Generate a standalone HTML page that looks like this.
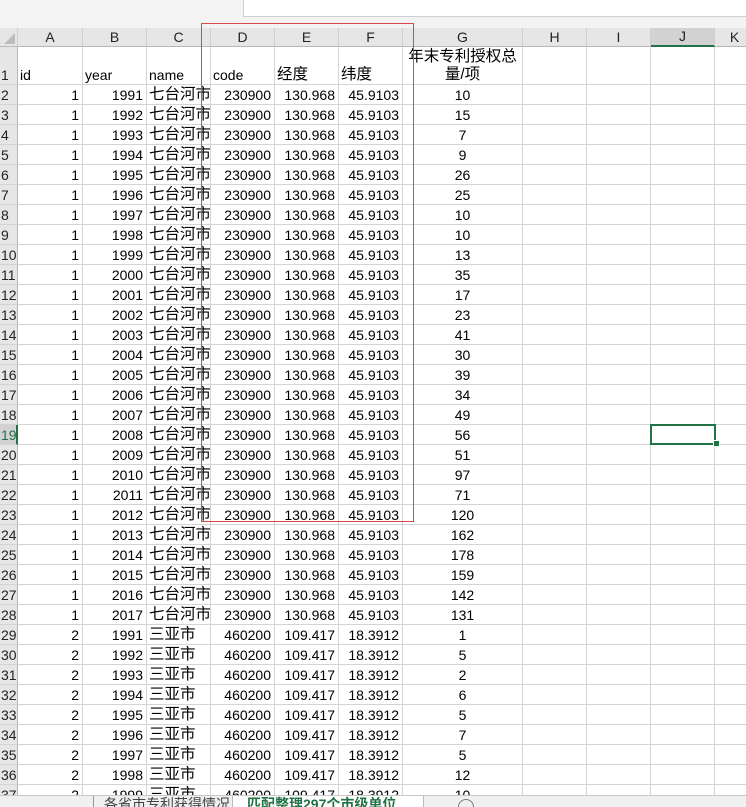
<!DOCTYPE html>
<html><head><meta charset="utf-8">
<style>
html,body{margin:0;padding:0;width:746px;height:807px;overflow:hidden;background:#fff;position:relative;font-family:"Liberation Sans","Noto Sans CJK SC",sans-serif;}
.top{position:absolute;left:0;top:0;width:746px;height:28px;background:#f3f3f3;}
.topbox{position:absolute;left:243px;top:0;width:503px;height:16px;background:#fff;border-left:1px solid #d0d0d0;border-bottom:1px solid #d0d0d0;}
table{position:absolute;left:0;top:28px;width:755px;border-collapse:separate;border-spacing:0;table-layout:fixed;font-size:14px;color:#000;}
td{box-sizing:border-box;padding:0 2px;border-right:1px solid #d4d4d4;border-bottom:1px solid #d4d4d4;height:20px;white-space:nowrap;overflow:hidden;vertical-align:bottom;line-height:18px;}
tr.h td{background:#e6e6e6;height:18px;text-align:center;border-right:1px solid #cfcfcf;border-bottom:1px solid #b8b8b8;color:#222;vertical-align:middle;line-height:17px;}
td.r{background:#e6e6e6;text-align:left;padding-left:1px;border-right:1px solid #b8b8b8;color:#222;font-size:14px;}
td.n{text-align:right;padding-right:3px;}
td.c{font-size:15.5px;}
td.g{text-align:center;}
tr.r1 td{height:38px;}
.sel{position:absolute;left:650px;top:424px;width:62px;height:17px;border:2px solid #217346;}
.selh{position:absolute;left:713px;top:440px;width:5px;height:5px;background:#217346;border:1px solid #fff;}
.red{position:absolute;left:201px;top:23px;width:211px;height:497px;border:1px solid #d84a4a;}
.tabs{position:absolute;left:0;top:795px;width:746px;height:12px;background:#f0f0f0;border-top:1px solid #c8c8c8;font-size:14px;overflow:hidden;}
.t1{position:absolute;left:93px;top:0;height:12px;border-left:1px solid #999;padding-left:10px;color:#444;line-height:16px;}
.t2{position:absolute;left:232px;top:-1px;width:192px;height:13px;background:#fff;color:#217346;font-weight:bold;line-height:18px;padding-left:14px;box-sizing:border-box;border-left:1px solid #bbb;border-right:1px solid #bbb;}
.plus{position:absolute;left:458px;top:3px;width:14px;height:14px;border:1px solid #777;border-radius:50%;}
</style></head><body>
<div class="top"><div class="topbox"></div></div>
<table>
<colgroup><col style="width:18px"><col style="width:65px"><col style="width:64px"><col style="width:64px"><col style="width:64px"><col style="width:64px"><col style="width:64px"><col style="width:120px"><col style="width:64px"><col style="width:64px"><col style="width:64px"><col style="width:40px"></colgroup>
<tr class="h"><td style="background:#e6e6e6;position:relative"><span style="position:absolute;right:2px;bottom:2px;width:0;height:0;border-left:11px solid transparent;border-bottom:11px solid #bdbdbd"></span></td><td>A</td><td>B</td><td>C</td><td>D</td><td>E</td><td>F</td><td>G</td><td>H</td><td>I</td><td style="background:#d2d2d2;border-bottom:2px solid #217346">J</td><td>K</td></tr>
<tr class="r1"><td class="r">1</td><td>id</td><td>year</td><td>name</td><td>code</td><td class="c">经度</td><td class="c">纬度</td><td class="g c" style="white-space:normal;line-height:18px">年末专利授权总量/项</td><td></td><td></td><td></td><td></td></tr>
<tr><td class="r">2</td><td class="n">1</td><td class="n">1991</td><td class="c">七台河市</td><td class="n">230900</td><td class="n">130.968</td><td class="n">45.9103</td><td class="g">10</td><td></td><td></td><td></td><td></td></tr>
<tr><td class="r">3</td><td class="n">1</td><td class="n">1992</td><td class="c">七台河市</td><td class="n">230900</td><td class="n">130.968</td><td class="n">45.9103</td><td class="g">15</td><td></td><td></td><td></td><td></td></tr>
<tr><td class="r">4</td><td class="n">1</td><td class="n">1993</td><td class="c">七台河市</td><td class="n">230900</td><td class="n">130.968</td><td class="n">45.9103</td><td class="g">7</td><td></td><td></td><td></td><td></td></tr>
<tr><td class="r">5</td><td class="n">1</td><td class="n">1994</td><td class="c">七台河市</td><td class="n">230900</td><td class="n">130.968</td><td class="n">45.9103</td><td class="g">9</td><td></td><td></td><td></td><td></td></tr>
<tr><td class="r">6</td><td class="n">1</td><td class="n">1995</td><td class="c">七台河市</td><td class="n">230900</td><td class="n">130.968</td><td class="n">45.9103</td><td class="g">26</td><td></td><td></td><td></td><td></td></tr>
<tr><td class="r">7</td><td class="n">1</td><td class="n">1996</td><td class="c">七台河市</td><td class="n">230900</td><td class="n">130.968</td><td class="n">45.9103</td><td class="g">25</td><td></td><td></td><td></td><td></td></tr>
<tr><td class="r">8</td><td class="n">1</td><td class="n">1997</td><td class="c">七台河市</td><td class="n">230900</td><td class="n">130.968</td><td class="n">45.9103</td><td class="g">10</td><td></td><td></td><td></td><td></td></tr>
<tr><td class="r">9</td><td class="n">1</td><td class="n">1998</td><td class="c">七台河市</td><td class="n">230900</td><td class="n">130.968</td><td class="n">45.9103</td><td class="g">10</td><td></td><td></td><td></td><td></td></tr>
<tr><td class="r">10</td><td class="n">1</td><td class="n">1999</td><td class="c">七台河市</td><td class="n">230900</td><td class="n">130.968</td><td class="n">45.9103</td><td class="g">13</td><td></td><td></td><td></td><td></td></tr>
<tr><td class="r">11</td><td class="n">1</td><td class="n">2000</td><td class="c">七台河市</td><td class="n">230900</td><td class="n">130.968</td><td class="n">45.9103</td><td class="g">35</td><td></td><td></td><td></td><td></td></tr>
<tr><td class="r">12</td><td class="n">1</td><td class="n">2001</td><td class="c">七台河市</td><td class="n">230900</td><td class="n">130.968</td><td class="n">45.9103</td><td class="g">17</td><td></td><td></td><td></td><td></td></tr>
<tr><td class="r">13</td><td class="n">1</td><td class="n">2002</td><td class="c">七台河市</td><td class="n">230900</td><td class="n">130.968</td><td class="n">45.9103</td><td class="g">23</td><td></td><td></td><td></td><td></td></tr>
<tr><td class="r">14</td><td class="n">1</td><td class="n">2003</td><td class="c">七台河市</td><td class="n">230900</td><td class="n">130.968</td><td class="n">45.9103</td><td class="g">41</td><td></td><td></td><td></td><td></td></tr>
<tr><td class="r">15</td><td class="n">1</td><td class="n">2004</td><td class="c">七台河市</td><td class="n">230900</td><td class="n">130.968</td><td class="n">45.9103</td><td class="g">30</td><td></td><td></td><td></td><td></td></tr>
<tr><td class="r">16</td><td class="n">1</td><td class="n">2005</td><td class="c">七台河市</td><td class="n">230900</td><td class="n">130.968</td><td class="n">45.9103</td><td class="g">39</td><td></td><td></td><td></td><td></td></tr>
<tr><td class="r">17</td><td class="n">1</td><td class="n">2006</td><td class="c">七台河市</td><td class="n">230900</td><td class="n">130.968</td><td class="n">45.9103</td><td class="g">34</td><td></td><td></td><td></td><td></td></tr>
<tr><td class="r">18</td><td class="n">1</td><td class="n">2007</td><td class="c">七台河市</td><td class="n">230900</td><td class="n">130.968</td><td class="n">45.9103</td><td class="g">49</td><td></td><td></td><td></td><td></td></tr>
<tr><td class="r" style="background:#d2d2d2;border-right:2px solid #217346;color:#217346">19</td><td class="n">1</td><td class="n">2008</td><td class="c">七台河市</td><td class="n">230900</td><td class="n">130.968</td><td class="n">45.9103</td><td class="g">56</td><td></td><td></td><td></td><td></td></tr>
<tr><td class="r">20</td><td class="n">1</td><td class="n">2009</td><td class="c">七台河市</td><td class="n">230900</td><td class="n">130.968</td><td class="n">45.9103</td><td class="g">51</td><td></td><td></td><td></td><td></td></tr>
<tr><td class="r">21</td><td class="n">1</td><td class="n">2010</td><td class="c">七台河市</td><td class="n">230900</td><td class="n">130.968</td><td class="n">45.9103</td><td class="g">97</td><td></td><td></td><td></td><td></td></tr>
<tr><td class="r">22</td><td class="n">1</td><td class="n">2011</td><td class="c">七台河市</td><td class="n">230900</td><td class="n">130.968</td><td class="n">45.9103</td><td class="g">71</td><td></td><td></td><td></td><td></td></tr>
<tr><td class="r">23</td><td class="n">1</td><td class="n">2012</td><td class="c">七台河市</td><td class="n">230900</td><td class="n">130.968</td><td class="n">45.9103</td><td class="g">120</td><td></td><td></td><td></td><td></td></tr>
<tr><td class="r">24</td><td class="n">1</td><td class="n">2013</td><td class="c">七台河市</td><td class="n">230900</td><td class="n">130.968</td><td class="n">45.9103</td><td class="g">162</td><td></td><td></td><td></td><td></td></tr>
<tr><td class="r">25</td><td class="n">1</td><td class="n">2014</td><td class="c">七台河市</td><td class="n">230900</td><td class="n">130.968</td><td class="n">45.9103</td><td class="g">178</td><td></td><td></td><td></td><td></td></tr>
<tr><td class="r">26</td><td class="n">1</td><td class="n">2015</td><td class="c">七台河市</td><td class="n">230900</td><td class="n">130.968</td><td class="n">45.9103</td><td class="g">159</td><td></td><td></td><td></td><td></td></tr>
<tr><td class="r">27</td><td class="n">1</td><td class="n">2016</td><td class="c">七台河市</td><td class="n">230900</td><td class="n">130.968</td><td class="n">45.9103</td><td class="g">142</td><td></td><td></td><td></td><td></td></tr>
<tr><td class="r">28</td><td class="n">1</td><td class="n">2017</td><td class="c">七台河市</td><td class="n">230900</td><td class="n">130.968</td><td class="n">45.9103</td><td class="g">131</td><td></td><td></td><td></td><td></td></tr>
<tr><td class="r">29</td><td class="n">2</td><td class="n">1991</td><td class="c">三亚市</td><td class="n">460200</td><td class="n">109.417</td><td class="n">18.3912</td><td class="g">1</td><td></td><td></td><td></td><td></td></tr>
<tr><td class="r">30</td><td class="n">2</td><td class="n">1992</td><td class="c">三亚市</td><td class="n">460200</td><td class="n">109.417</td><td class="n">18.3912</td><td class="g">5</td><td></td><td></td><td></td><td></td></tr>
<tr><td class="r">31</td><td class="n">2</td><td class="n">1993</td><td class="c">三亚市</td><td class="n">460200</td><td class="n">109.417</td><td class="n">18.3912</td><td class="g">2</td><td></td><td></td><td></td><td></td></tr>
<tr><td class="r">32</td><td class="n">2</td><td class="n">1994</td><td class="c">三亚市</td><td class="n">460200</td><td class="n">109.417</td><td class="n">18.3912</td><td class="g">6</td><td></td><td></td><td></td><td></td></tr>
<tr><td class="r">33</td><td class="n">2</td><td class="n">1995</td><td class="c">三亚市</td><td class="n">460200</td><td class="n">109.417</td><td class="n">18.3912</td><td class="g">5</td><td></td><td></td><td></td><td></td></tr>
<tr><td class="r">34</td><td class="n">2</td><td class="n">1996</td><td class="c">三亚市</td><td class="n">460200</td><td class="n">109.417</td><td class="n">18.3912</td><td class="g">7</td><td></td><td></td><td></td><td></td></tr>
<tr><td class="r">35</td><td class="n">2</td><td class="n">1997</td><td class="c">三亚市</td><td class="n">460200</td><td class="n">109.417</td><td class="n">18.3912</td><td class="g">5</td><td></td><td></td><td></td><td></td></tr>
<tr><td class="r">36</td><td class="n">2</td><td class="n">1998</td><td class="c">三亚市</td><td class="n">460200</td><td class="n">109.417</td><td class="n">18.3912</td><td class="g">12</td><td></td><td></td><td></td><td></td></tr>
<tr><td class="r">37</td><td class="n">2</td><td class="n">1999</td><td class="c">三亚市</td><td class="n">460200</td><td class="n">109.417</td><td class="n">18.3912</td><td class="g">10</td><td></td><td></td><td></td><td></td></tr>
</table>
<div class="red"></div>
<div class="sel"></div><div class="selh"></div>
<div class="tabs">
<div class="t1">各省市专利获得情况</div>
<div class="t2">匹配整理297个市级单位code</div>
<div class="plus"></div>
</div>
</body></html>
